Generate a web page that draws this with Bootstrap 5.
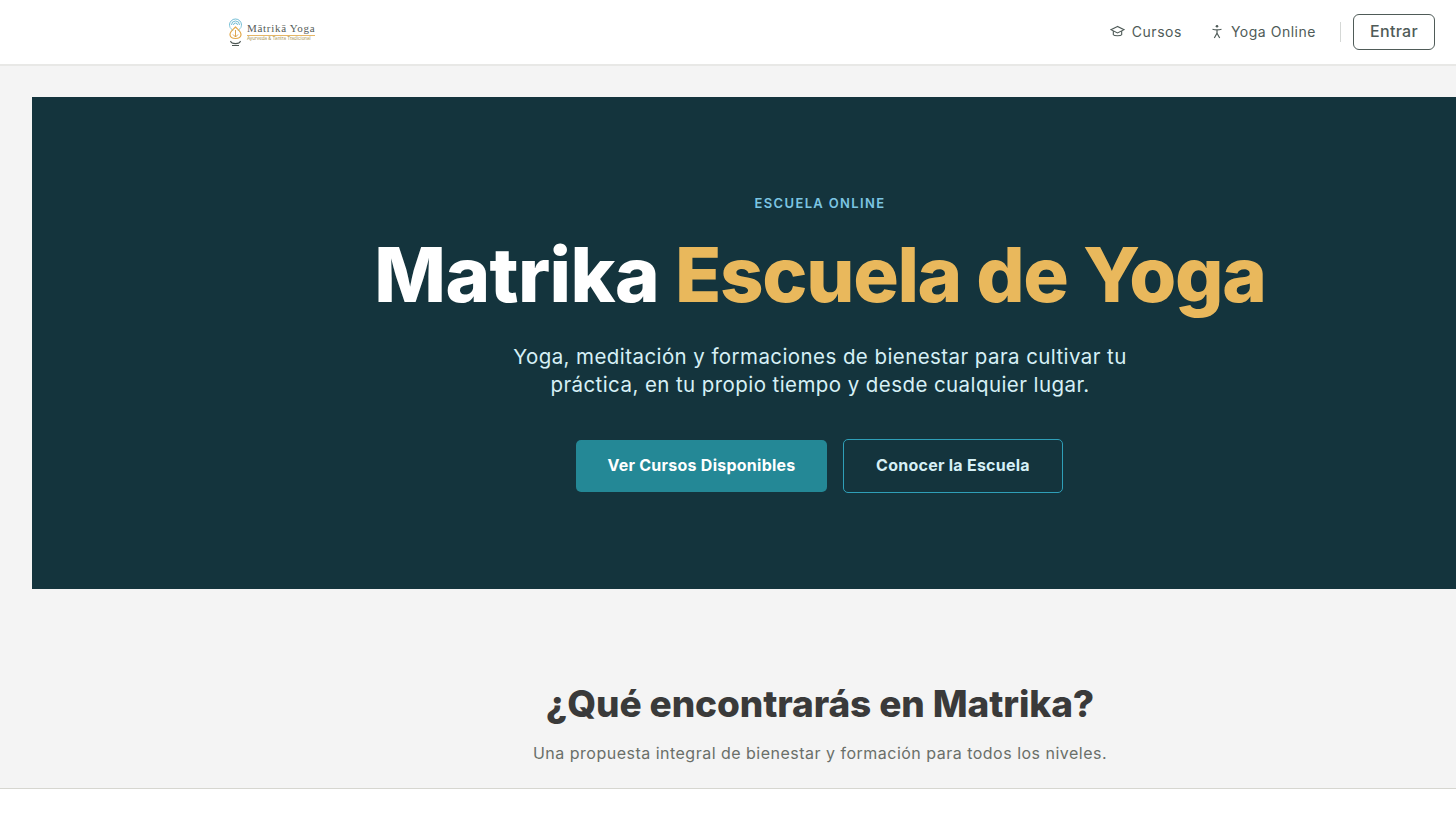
<!doctype html>
<html lang="es">
<head>
<meta charset="utf-8">
<title>Matrika Escuela de Yoga</title>
<link href="https://cdn.jsdelivr.net/npm/bootstrap@5.3.0/dist/css/bootstrap.min.css" rel="stylesheet">
<style>
html,body{height:816px;overflow:hidden}
body{background:#f4f4f4;font-family:Inter,"Liberation Sans",sans-serif;color:#3a3a3a}
.topbar{height:66px;background:#fff;border-bottom:2px solid #e8e8e6;padding:0 21px 0 228px}
.brand-name{font-family:"Liberation Serif",serif;font-size:11px;line-height:11px;letter-spacing:.7px;color:#555c58;border-bottom:1px solid #e5b766;padding-bottom:1px;white-space:nowrap}
.brand-sub{font-size:4.5px;line-height:6px;color:#a8924f;white-space:nowrap}
.nav-item-link{font-size:14px;color:#4f5b58;text-decoration:none;gap:7px;letter-spacing:.52px;padding-bottom:2px}
.nav-sep{width:1px;height:20px;background:#d5d8d6;margin:0 12px 0 24px}
.btn-entrar{width:82px;height:36px;padding:0 0 2px;font-size:16px;font-weight:500;color:#4f5b58;border:1px solid #4f5b58;border-radius:6px;background:#fff;letter-spacing:.02em}
.stage{margin-left:32px}
.stage-inner{padding-left:152px}
.hero-band{margin-top:31px;height:492px;background:#14343d;padding-top:97px}
.eyebrow{font-size:13px;line-height:19px;font-weight:600;letter-spacing:1.35px;color:#7cc5e3}
.hero-title{font-size:76px;line-height:92px;font-weight:800;letter-spacing:-.6px;margin:15px 0 23px;color:#fff}
.hero-title span{color:#e9b85c;letter-spacing:-1.35px}
.hero-copy{font-size:20.5px;line-height:28px;letter-spacing:.42px;color:#d6f0f6;margin:0 0 40px}
.btn-solid,.btn-line{height:54px;font-size:16px;font-weight:700;border-radius:5px;padding:0 0 2px;display:flex;align-items:center;justify-content:center;letter-spacing:.25px}
.btn-solid{width:251px;height:52px;margin-top:1px;background:#248896;border:0;color:#fff}
.btn-line{width:220px;background:transparent;border:1px solid #2f9fb8;color:#d6f0f6}
.btn-row{margin-right:1px}
.section-title{font-size:37px;line-height:46px;font-weight:800;margin:92px 0 0;color:#3a3a3a;letter-spacing:-.09px}
.section-copy{font-size:16px;line-height:24px;letter-spacing:.49px;margin:14px 0 0;color:#6a6f69}
.bottom-strip{position:fixed;left:0;right:0;top:788px;bottom:0;background:#fff;border-top:1px solid #d6d6d0}
</style>
</head>
<body>
<header class="topbar d-flex align-items-center justify-content-between">
  <a href="#" class="d-flex align-items-center gap-1 text-decoration-none">
    <svg width="15" height="30" viewBox="0 0 15 30" fill="none" aria-hidden="true">
      <path d="M1.500 8a6 6 0 0 1 12 0M3.500 8a4 4 0 0 1 8 0M5.500 8a2 2 0 0 1 4 0" stroke="#63b6cf" stroke-width=".9"/>
      <path d="M1.500 8c0 4 3 4 3.500 6M13.500 8c0 4-3 4-3.500 6" stroke="#7fc4d8" stroke-width=".9"/>
      <path d="M7.500 10c-3 3-6 5-5.500 8 .4 2.500 3 3.500 5.500 3.500S12.600 20.500 13 18c.5-3-2.500-5-5.500-8Z" stroke="#e2a94c" stroke-width="1.200"/>
      <path d="M7.500 13v7M5 17.500l2.500 2.500 2.500-2.500" stroke="#d99b3c" stroke-width=".9"/>
      <path d="M2.500 24c1 3.500 9 3.500 10 0M4 28.500h7" stroke="#4d5754" stroke-width="1.100"/>
    </svg>
    <span class="d-flex flex-column">
      <span class="brand-name">Mātrikā Yoga</span>
      <span class="brand-sub">Ayurveda &amp; Tantra Tradicional</span>
    </span>
  </a>
  <nav class="d-flex align-items-center">
    <a href="#" class="nav-item-link d-flex align-items-center">
      <svg width="15" height="13" viewBox="0 0 16 14" fill="none" stroke="#4f5b58" stroke-width="1.200" aria-hidden="true"><path d="M8 1.500 1 5l7 3.500L15 5 8 1.500Z"/><path d="M3.500 6.500v4c1 1.500 8 1.500 9 0v-4"/></svg>
      Cursos
    </a>
    <a href="#" class="nav-item-link d-flex align-items-center ms-4 ps-1">
      <svg width="14" height="15" viewBox="0 0 14 15" fill="none" stroke="#4f5b58" stroke-width="1.200" aria-hidden="true"><circle cx="7" cy="2.200" r="1.300" fill="#4f5b58" stroke="none"/><path d="M2.500 5.200c3 1 6 1 9 0M7 5.800v3.500M7 9.300 4.300 14M7 9.300 9.700 14"/></svg>
      Yoga Online
    </a>
    <span class="nav-sep"></span>
    <button class="btn-entrar" type="button">Entrar</button>
  </nav>
</header>
<main class="stage">
  <section class="hero-band text-center stage-inner">
    <div class="eyebrow">ESCUELA ONLINE</div>
    <h1 class="hero-title">Matrika <span>Escuela de Yoga</span></h1>
    <p class="hero-copy">Yoga, meditación y formaciones de bienestar para cultivar tu<br>práctica, en tu propio tiempo y desde cualquier lugar.</p>
    <div class="d-flex justify-content-center gap-3 btn-row">
      <a href="#" class="btn btn-solid">Ver Cursos Disponibles</a>
      <a href="#" class="btn btn-line">Conocer la Escuela</a>
    </div>
  </section>
  <section class="text-center stage-inner">
    <h2 class="section-title">¿Qué encontrarás en Matrika?</h2>
    <p class="section-copy">Una propuesta integral de bienestar y formación para todos los niveles.</p>
  </section>
</main>
<div class="bottom-strip"></div>
<script src="https://cdn.jsdelivr.net/npm/bootstrap@5.3.0/dist/js/bootstrap.bundle.min.js"></script>
</body>
</html>
